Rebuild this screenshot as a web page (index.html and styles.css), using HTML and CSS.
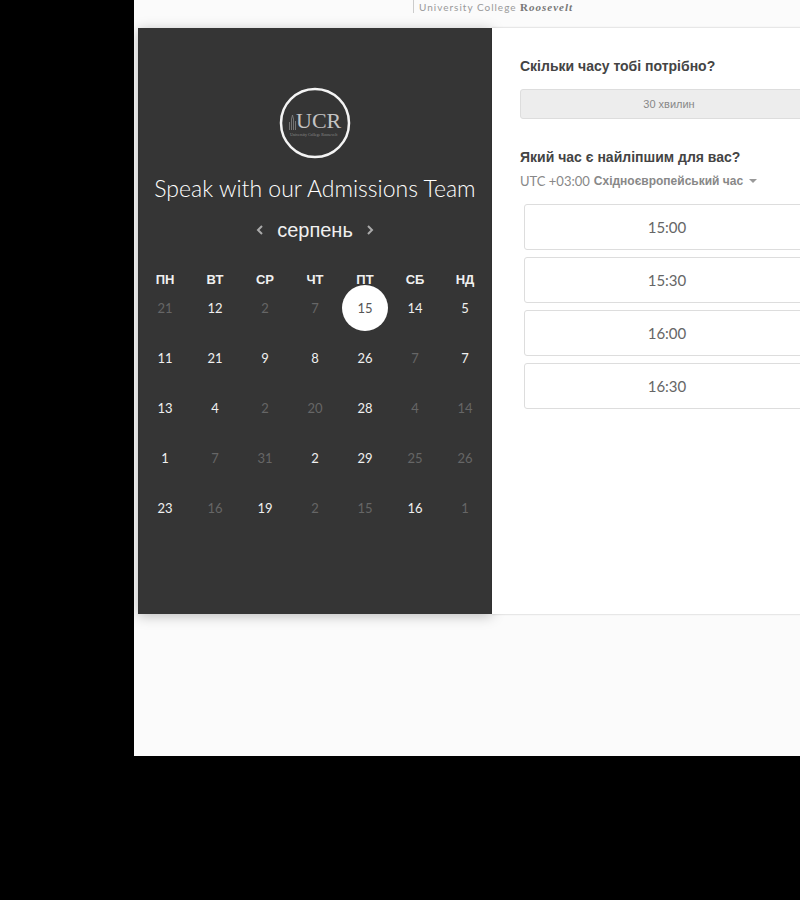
FILE: index.html
```html
<!DOCTYPE html>
<html lang="uk">
<head>
<meta charset="utf-8">
<meta name="viewport" content="width=device-width, initial-scale=1">
<title>Speak with our Admissions Team</title>
<link rel="stylesheet" href="styles.css">
</head>
<body>
<main class="page">
  <header class="brand"><span class="brand-name">University College <span class="brand-serif">R<em>oosevelt</em></span></span></header>
  <div class="scheduler">
    <section class="calendar">
      <svg class="logo" viewBox="0 0 72 72" role="img" aria-label="UCR">
        <circle cx="36" cy="36" r="34" fill="none" stroke="#f4f4f4" stroke-width="2.5"/>
        <path d="M10.5 43V35M12.5 43V32l1-4 1 4v11M16.500 43V34" fill="none" stroke="#858585" stroke-width=".8"/>
        <text class="logo-name" x="17" y="41">UCR</text>
        <text class="logo-caption" x="11" y="49">University College Roosevelt</text>
      </svg>
      <h1 class="title">Speak with our Admissions Team</h1>
      <div class="month">
        <button class="arrow" type="button" aria-label="Попередній місяць"><svg viewBox="0 0 8 10"><path d="M6 1 2 5l4 4"/></svg></button>
        <h2 class="month-name">серпень</h2>
        <button class="arrow" type="button" aria-label="Наступний місяць"><svg viewBox="0 0 8 10"><path d="m2 1 4 4-4 4"/></svg></button>
      </div>
      <table class="days">
        <thead><tr><th>ПН</th><th>ВТ</th><th>СР</th><th>ЧТ</th><th>ПТ</th><th>СБ</th><th>НД</th></tr></thead>
        <tbody>
          <tr><td><button class="day" disabled>21</button></td><td><button class="day">12</button></td><td><button class="day" disabled>2</button></td><td><button class="day" disabled>7</button></td><td><button class="day selected" aria-pressed="true">15</button></td><td><button class="day">14</button></td><td><button class="day">5</button></td></tr>
          <tr><td><button class="day">11</button></td><td><button class="day">21</button></td><td><button class="day">9</button></td><td><button class="day">8</button></td><td><button class="day">26</button></td><td><button class="day" disabled>7</button></td><td><button class="day">7</button></td></tr>
          <tr><td><button class="day">13</button></td><td><button class="day">4</button></td><td><button class="day" disabled>2</button></td><td><button class="day" disabled>20</button></td><td><button class="day">28</button></td><td><button class="day" disabled>4</button></td><td><button class="day" disabled>14</button></td></tr>
          <tr><td><button class="day">1</button></td><td><button class="day" disabled>7</button></td><td><button class="day" disabled>31</button></td><td><button class="day">2</button></td><td><button class="day">29</button></td><td><button class="day" disabled>25</button></td><td><button class="day" disabled>26</button></td></tr>
          <tr><td><button class="day">23</button></td><td><button class="day" disabled>16</button></td><td><button class="day">19</button></td><td><button class="day" disabled>2</button></td><td><button class="day" disabled>15</button></td><td><button class="day">16</button></td><td><button class="day" disabled>1</button></td></tr>
        </tbody>
      </table>
    </section>
    <section class="booking">
      <h2 class="question">Скільки часу тобі потрібно?</h2>
      <button class="duration" type="button">30 хвилин</button>
      <h2 class="question">Який час є найліпшим для вас?</h2>
      <button class="zone" type="button">UTC +03:00 <b>Східноєвропейський час</b><span class="caret"></span></button>
      <div class="times">
        <button class="time" type="button">15:00</button>
        <button class="time" type="button">15:30</button>
        <button class="time" type="button">16:00</button>
        <button class="time" type="button">16:30</button>
      </div>
    </section>
  </div>
</main>
</body>
</html>
```
FILE: styles.css
```css
* { box-sizing: border-box; }

body {
  margin: 0;
  background: #000;
  color: #444;
  font-family: Lato, "Liberation Sans", sans-serif;
  overflow-x: hidden;
}

h1, h2 { margin: 0; }

button {
  padding: 0;
  border: 0;
  background: none;
  color: inherit;
  font: inherit;
}

.page {
  margin-left: 134px;
  padding: 0 0 142px 4px;
  background: #fbfbfb;
  overflow: hidden;
}

.brand {
  height: 28px;
  padding-left: 275px;
}

.brand-name {
  display: inline-block;
  height: 13px;
  padding-left: 5px;
  border-left: 1px solid #ccc;
  color: #999;
  font-size: 10px;
  line-height: 14px;
  letter-spacing: 1px;
  white-space: nowrap;
  vertical-align: top;
}

.brand-serif {
  color: #777;
  font-family: "Liberation Serif", serif;
  font-size: 11px;
  font-weight: bold;
}

.scheduler { display: flex; }

.calendar {
  display: flex;
  flex: 0 0 354px;
  flex-direction: column;
  align-items: center;
  padding: 59px 2px 75px;
  background: #353535;
  color: #f0f0f0;
  box-shadow: 0 2px 12px rgba(0, 0, 0, 0.25);
}

.logo {
  width: 72px;
  height: 72px;
}

.logo-name {
  fill: #c4c4c4;
  font: 22px "Liberation Serif", serif;
}

.logo-caption {
  fill: #8c8c8c;
  font: 4px "Liberation Serif", serif;
}

.title {
  margin-top: 13px;
  color: #fff;
  font-size: 23px;
  font-weight: 300;
  line-height: 32px;
  white-space: nowrap;
}

.month {
  display: flex;
  align-items: center;
  gap: 12px;
  margin-top: 10px;
}

.month-name {
  font: 20px/32px "Liberation Sans", sans-serif;
}

.arrow {
  display: flex;
  justify-content: center;
  width: 10px;
}

.arrow svg {
  width: 8px;
  height: 10px;
  fill: none;
  stroke: #aaa;
  stroke-width: 2;
}

.days {
  width: 100%;
  margin-top: 25px;
  border-collapse: collapse;
  table-layout: fixed;
}

.days th {
  padding: 0;
  font: bold 13px/18px "Liberation Sans", sans-serif;
}

.days td {
  height: 50px;
  padding: 0;
  text-align: center;
  vertical-align: top;
}

.day {
  width: 38px;
  height: 38px;
  border-radius: 50%;
  font-size: 13px;
}

.day:disabled { color: #666; }

.day.selected {
  position: relative;
  background: #fff;
  color: #555;
  box-shadow: 0 0 0 4px #fff;
}

.booking {
  flex: 1 0 354px;
  padding: 28px;
  background: #fff;
  box-shadow: 0 0 2px rgba(0, 0, 0, 0.25);
}

.question {
  font: bold 14px/20px "Liberation Sans", sans-serif;
}

.duration {
  display: block;
  width: 100%;
  height: 30px;
  margin: 13px 0 28px;
  border: 1px solid #ddd;
  border-radius: 3px;
  background: #ededed;
  color: #888;
  font: 11px "Liberation Sans", sans-serif;
}

.zone {
  display: flex;
  align-items: center;
  gap: 4px;
  margin-top: 4px;
  color: #888;
  font-size: 13px;
  line-height: 20px;
  white-space: nowrap;
}

.zone b { font: bold 12px/20px "Liberation Sans", sans-serif; }

.caret {
  margin-left: 2px;
  border: 4px solid transparent;
  border-top-color: #999;
  border-bottom: 0;
}

.times {
  display: grid;
  gap: 7px;
  padding: 13px 8px 0 4px;
}

.time {
  height: 46px;
  border: 1px solid #ddd;
  border-radius: 3px;
  background: #fff;
  color: #666;
  font-size: 15px;
}
```
